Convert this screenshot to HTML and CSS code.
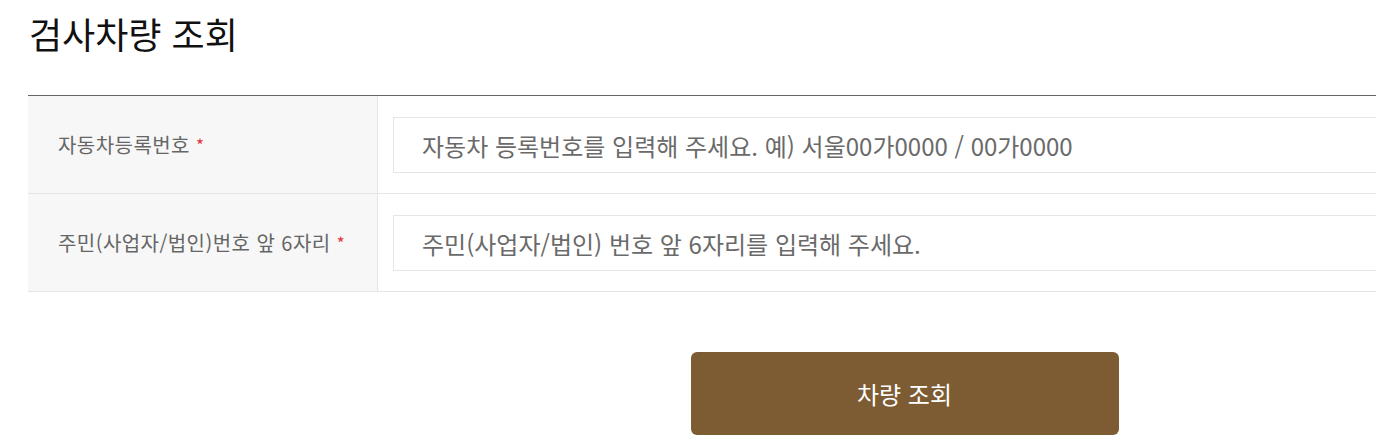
FILE: index.html
```html
<!DOCTYPE html>
<html lang="ko">
<head>
<meta charset="utf-8">
<title>검사차량 조회</title>
<link rel="stylesheet" href="styles.css">
</head>
<body>
<div class="page">
  <h2 class="title">검사차량 조회</h2>
  <div class="form-table">
    <div class="row">
      <div class="label">자동차등록번호 <span class="req">*</span></div>
      <div class="field"><input class="input" type="text" placeholder="자동차 등록번호를 입력해 주세요. 예) 서울00가0000 / 00가0000"></div>
    </div>
    <div class="row">
      <div class="label">주민(사업자/법인)번호 앞 6자리 <span class="req">*</span></div>
      <div class="field"><input class="input" type="text" placeholder="주민(사업자/법인) 번호 앞 6자리를 입력해 주세요."></div>
    </div>
  </div>
  <div class="actions">
    <button class="btn" type="button">차량 조회</button>
  </div>
</div>
</body>
</html>
```
FILE: styles.css
```css
html, body {
  margin: 0;
  padding: 0;
  overflow: hidden;
  background: #fff;
}
body {
  font-family: "Noto Sans CJK KR", "Noto Sans", sans-serif;
  color: #222;
}
.page {
  width: 1753px;
  margin-left: 28px;
}
.title {
  margin: 0;
  padding: 8px 0 0 1px;
  font-size: 36px;
  font-weight: 400;
  line-height: 50px;
  color: #111;
  height: 95px;
  box-sizing: border-box;
}
.form-table {
  border-top: 1px solid #666;
}
.row {
  display: grid;
  grid-template-columns: 350px 1fr;
  border-bottom: 1px solid #e5e5e5;
  height: 98px;
  box-sizing: border-box;
}
.label {
  background: #f7f7f7;
  border-right: 1px solid #e5e5e5;
  display: flex;
  align-items: center;
  padding-left: 30px;
  font-size: 20px;
  letter-spacing: 0.45px;
  color: #666;
  white-space: pre;
}
.req {
  color: #e0393e;
  font-size: 17px;
}
.field {
  display: flex;
  align-items: center;
  padding-left: 15px;
}
.input {
  width: 100%;
  height: 56px;
  box-sizing: border-box;
  border: 1px solid #e5e5e5;
  padding: 0 28px;
  font-family: inherit;
  font-size: 24px;
  color: #333;
  outline: none;
  margin-top: 1px;
}
.input::placeholder {
  color: #6a6a6a;
}
.actions {
  display: flex;
  justify-content: center;
  padding-top: 60px;
}
.btn {
  width: 428px;
  height: 83px;
  background: #7d5c33;
  color: #fff;
  border: none;
  border-radius: 6px;
  font-family: inherit;
  font-size: 24px;
  cursor: pointer;
}
```
